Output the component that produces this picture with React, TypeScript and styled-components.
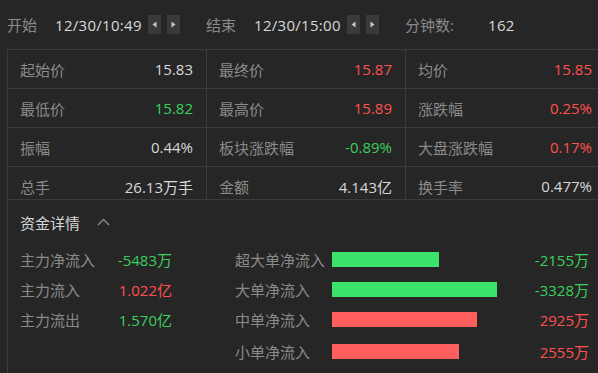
import styled, { createGlobalStyle } from "styled-components";

const GlobalStyle = createGlobalStyle`
  html, body {
    margin: 0;
    padding: 0;
    background: #262626;
    overflow: hidden;
  }
  body {
    font-family: "Open Sans", "Noto Sans CJK SC", sans-serif;
    font-size: 15px;
  }
`;

const COLORS = {
  line: "#3b3b3b",
  label: "#8a8a8a",
  value: "#d8d8d8",
  red: "#ff5050",
  green: "#3acf5c",
  barRed: "#ff5e5e",
  barGreen: "#3be36a",
};

type Tone = "normal" | "red" | "green";
const toneColor = (t?: Tone) =>
  t === "red" ? COLORS.red : t === "green" ? COLORS.green : COLORS.value;

const Page = styled.div`
  width: 604px;
  height: 373px;
  padding-left: 7px;
  color: ${COLORS.value};
`;

const TopBar = styled.div`
  height: 49px;
  display: flex;
  align-items: center;
  border-bottom: 1px solid ${COLORS.line};
`;

const TopGroup = styled.div`
  width: 199px;
  display: flex;
  align-items: center;
`;

const TopLabel = styled.span<{ $w: number }>`
  width: ${(p) => p.$w}px;
  color: ${COLORS.label};
`;

const TopValue = styled.span`
  color: ${COLORS.value};
  letter-spacing: 0.3px;
`;

const Stepper = styled.div`
  display: flex;
  gap: 6px;
  margin-left: 6px;
`;

const StepBtn = styled.button`
  width: 13px;
  height: 19px;
  padding: 0;
  border: none;
  background: #3a3a3a;
  display: flex;
  align-items: center;
  justify-content: center;
  cursor: pointer;
`;

const Panel = styled.div`
  border-left: 1px solid ${COLORS.line};
  height: 323px;
`;

const StatGrid = styled.div`
  display: grid;
  grid-template-columns: repeat(3, 199px);
`;

const Cell = styled.div<{ $last?: boolean; $edge?: boolean }>`
  height: ${(p) => (p.$last ? 33 : 39)}px;
  box-sizing: border-box;
  padding: ${(p) => (p.$last ? "6px 13px 0 12px" : "0 13px 0 12px")};
  border-bottom: 1px solid ${COLORS.line};
  border-right: ${(p) => (p.$edge ? "none" : `1px solid ${COLORS.line}`)};
  display: flex;
  align-items: center;
  justify-content: space-between;
`;

const CellLabel = styled.span`
  color: ${COLORS.label};
`;

const CellValue = styled.span<{ $tone?: Tone }>`
  color: ${(p) => toneColor(p.$tone)};
`;

const Section = styled.div`
  padding-left: 12px;
`;

const SectionHead = styled.div`
  height: 44px;
  display: flex;
  align-items: center;
  gap: 17px;
  color: ${COLORS.value};
`;

const FundArea = styled.div`
  display: flex;
  gap: 63px;
`;

const FundCol = styled.div<{ $w: number }>`
  width: ${(p) => p.$w}px;
  display: flex;
  flex-direction: column;
`;

const FundRow = styled.div<{ $gapTop?: number }>`
  height: 30px;
  margin-top: ${(p) => p.$gapTop ?? 0}px;
  display: flex;
  align-items: center;
`;

const FundLabel = styled.span<{ $w?: number }>`
  color: ${COLORS.label};
  width: ${(p) => (p.$w ? `${p.$w}px` : "auto")};
  flex: ${(p) => (p.$w ? "none" : "1")};
`;

const FundValue = styled.span<{ $tone?: Tone }>`
  color: ${(p) => toneColor(p.$tone)};
  text-align: right;
`;

const BarTrack = styled.div`
  flex: 1;
  height: 15px;
`;

const Bar = styled.div<{ $tone: Tone }>`
  height: 15px;
  background: ${(p) => (p.$tone === "red" ? COLORS.barRed : COLORS.barGreen)};
`;

const Arrow = ({ dir }: { dir: "left" | "right" }) => (
  <svg width="5" height="7" viewBox="0 0 5 7">
    {dir === "left" ? (
      <polygon points="4.5,0.5 4.5,6.5 0.5,3.5" fill="#c8c8c8" />
    ) : (
      <polygon points="0.5,0.5 0.5,6.5 4.5,3.5" fill="#c8c8c8" />
    )}
  </svg>
);

const stats: { label: string; value: string; tone?: Tone }[][] = [
  [
    { label: "起始价", value: "15.83" },
    { label: "最终价", value: "15.87", tone: "red" },
    { label: "均价", value: "15.85", tone: "red" },
  ],
  [
    { label: "最低价", value: "15.82", tone: "green" },
    { label: "最高价", value: "15.89", tone: "red" },
    { label: "涨跌幅", value: "0.25%", tone: "red" },
  ],
  [
    { label: "振幅", value: "0.44%" },
    { label: "板块涨跌幅", value: "-0.89%", tone: "green" },
    { label: "大盘涨跌幅", value: "0.17%", tone: "red" },
  ],
  [
    { label: "总手", value: "26.13万手" },
    { label: "金额", value: "4.143亿" },
    { label: "换手率", value: "0.477%" },
  ],
];

const mainFlow: { label: string; value: string; tone: Tone }[] = [
  { label: "主力净流入", value: "-5483万", tone: "green" },
  { label: "主力流入", value: "1.022亿", tone: "red" },
  { label: "主力流出", value: "1.570亿", tone: "green" },
];

const orders = [
  { label: "超大单净流入", amount: -2155 },
  { label: "大单净流入", amount: -3328 },
  { label: "中单净流入", amount: 2925 },
  { label: "小单净流入", amount: 2555 },
];

const maxAmount = Math.max(...orders.map((o) => Math.abs(o.amount)));

function App() {
  return (
    <>
      <GlobalStyle />
      <Page>
        <TopBar>
          <TopGroup>
            <TopLabel $w={48}>开始</TopLabel>
            <TopValue>12/30/10:49</TopValue>
            <Stepper>
              <StepBtn>
                <Arrow dir="left" />
              </StepBtn>
              <StepBtn>
                <Arrow dir="right" />
              </StepBtn>
            </Stepper>
          </TopGroup>
          <TopGroup>
            <TopLabel $w={48}>结束</TopLabel>
            <TopValue>12/30/15:00</TopValue>
            <Stepper>
              <StepBtn>
                <Arrow dir="left" />
              </StepBtn>
              <StepBtn>
                <Arrow dir="right" />
              </StepBtn>
            </Stepper>
          </TopGroup>
          <TopGroup>
            <TopLabel $w={83}>分钟数:</TopLabel>
            <TopValue>162</TopValue>
          </TopGroup>
        </TopBar>
        <Panel>
          <StatGrid>
            {stats.map((row, ri) =>
              row.map((c, ci) => (
                <Cell key={`${ri}-${ci}`} $last={ri === stats.length - 1} $edge={ci === 2}>
                  <CellLabel>{c.label}</CellLabel>
                  <CellValue $tone={c.tone}>{c.value}</CellValue>
                </Cell>
              ))
            )}
          </StatGrid>
          <Section>
            <SectionHead>
              资金详情
              <svg width="13" height="8" viewBox="0 0 13 8">
                <polyline points="1,7 6.5,1.5 12,7" fill="none" stroke="#8a8a8a" strokeWidth="1.4" />
              </svg>
            </SectionHead>
            <FundArea>
              <FundCol $w={152}>
                {mainFlow.map((m) => (
                  <FundRow key={m.label}>
                    <FundLabel>{m.label}</FundLabel>
                    <FundValue $tone={m.tone}>{m.value}</FundValue>
                  </FundRow>
                ))}
              </FundCol>
              <FundCol $w={354}>
                {orders.map((o, i) => {
                  const tone: Tone = o.amount < 0 ? "green" : "red";
                  return (
                    <FundRow key={o.label} $gapTop={i === 3 ? 2 : 0}>
                      <FundLabel $w={97}>{o.label}</FundLabel>
                      <BarTrack>
                        <Bar $tone={tone} style={{ width: (Math.abs(o.amount) / maxAmount) * 165 }} />
                      </BarTrack>
                      <FundValue $tone={tone}>{o.amount}万</FundValue>
                    </FundRow>
                  );
                })}
              </FundCol>
            </FundArea>
          </Section>
        </Panel>
      </Page>
    </>
  );
}

export default App;
